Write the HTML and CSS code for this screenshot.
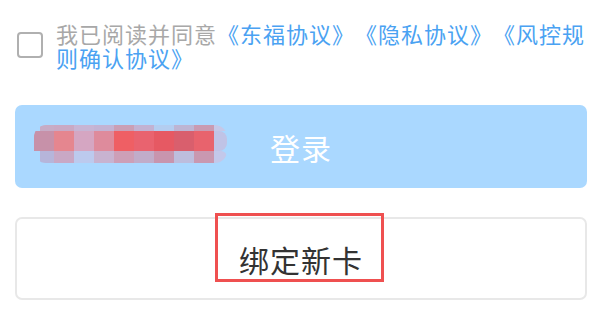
FILE: index.html
```html
<!DOCTYPE html>
<html lang="zh-CN">
<head>
<meta charset="utf-8">
<link rel="stylesheet" href="styles.css">
</head>
<body>
<div class="page">
  <div class="agree">
    <span class="checkbox"></span>
    <p class="agree-text">我已阅读并同意<a class="link">《东福协议》</a><a class="link">《隐私协议》</a><a class="link">《风控规则确认协议》</a></p>
  </div>

  <div class="btn btn-login">
    <span class="btn-label">登录</span>
    <div class="mosaic">
      <div class="row row-top">
        <i style="background:#c7acc6"></i><i style="background:#c9a9c4"></i><i style="background:#c7b5d4"></i><i style="background:#c3b3d3"></i><i style="background:#ca9fb5"></i><i style="background:#c2b2d2"></i><i style="background:#b3cdf0"></i><i style="background:#bdb5d3"></i><i style="background:#c99bb2"></i><i style="background:#c5c8e8"></i>
      </div>
      <div class="row row-mid">
        <i style="background:#c791a9"></i><i style="background:#e5868f"></i><i style="background:#d5a6c2"></i><i style="background:#de8b9c"></i><i style="background:#ef5f64"></i><i style="background:#e9636f"></i><i style="background:#e65963"></i><i style="background:#d95f6d"></i><i style="background:#e8636d"></i><i style="background:#c0c3e6"></i>
      </div>
      <div class="row row-low">
        <i style="background:#b6b5da"></i><i style="background:#c9a8c5"></i><i style="background:#bccaee"></i><i style="background:#c8b3d0"></i><i style="background:#cd9fb7"></i><i style="background:#c1acc9"></i><i style="background:#c895ae"></i><i style="background:#bdbddd"></i><i style="background:#c998b0"></i><i style="background:#c3c8ea"></i>
      </div>
    </div>
  </div>

  <div class="btn btn-bind">
    <span class="btn-label">绑定新卡</span>
    <span class="highlight"></span>
  </div>
</div>
</body>
</html>
```

FILE: styles.css
```css
html, body {
  margin: 0;
  padding: 0;
  background: #ffffff;
}

.page {
  font-family: "Noto Sans CJK SC", "Noto Sans", sans-serif;
  padding-top: 21px;
  text-spacing-trim: space-all;
}

.agree {
  display: flex;
  align-items: center;
  gap: 13px;
  padding-left: 17px;
}

.checkbox {
  flex: none;
  width: 22px;
  height: 22px;
  border: 2px solid #b0b0b0;
  border-radius: 4px;
  box-sizing: content-box;
}

.agree-text {
  margin: 0;
  width: 540px;
  font-size: 22px;
  letter-spacing: 1px;
  line-height: 24px;
  color: #a8a8a8;
  text-spacing-trim: space-all;
}

.link {
  color: #4aa2f2;
  text-decoration: none;
}

.btn {
  position: relative;
  box-sizing: border-box;
  width: 572px;
  height: 83px;
  margin-left: 15px;
  border-radius: 7px;
  display: flex;
  align-items: center;
  justify-content: center;
}

.btn-label {
  font-size: 30px;
  letter-spacing: 1px;
  line-height: 1;
}

.btn-login {
  margin-top: 36px;
  background: #aad8ff;
  color: #ffffff;
}

.btn-bind {
  margin-top: 29px;
  background: #ffffff;
  border: 2px solid #e8e8e8;
  color: #333333;
}

.mosaic {
  position: absolute;
  left: 19px;
  top: 20px;
  display: flex;
  flex-direction: column;
  border-radius: 12px;
  overflow: hidden;
}

.row {
  display: flex;
}

.row i {
  display: block;
  width: 20px;
}

.row-top i { height: 6px; }
.row-mid i { height: 20px; }
.row-low i { height: 12px; }

.row-top { padding-left: 6px; }
.row-top i:first-child { width: 14px; }
.row-low { padding-left: 6px; }
.row-low i:first-child { width: 14px; }
.row i:last-child { width: 13px; border-radius: 0 8px 8px 0; }

.highlight {
  position: absolute;
  left: 198px;
  top: -6px;
  width: 169px;
  height: 69px;
  box-sizing: border-box;
  border: 3px solid #ef5050;
}
```
